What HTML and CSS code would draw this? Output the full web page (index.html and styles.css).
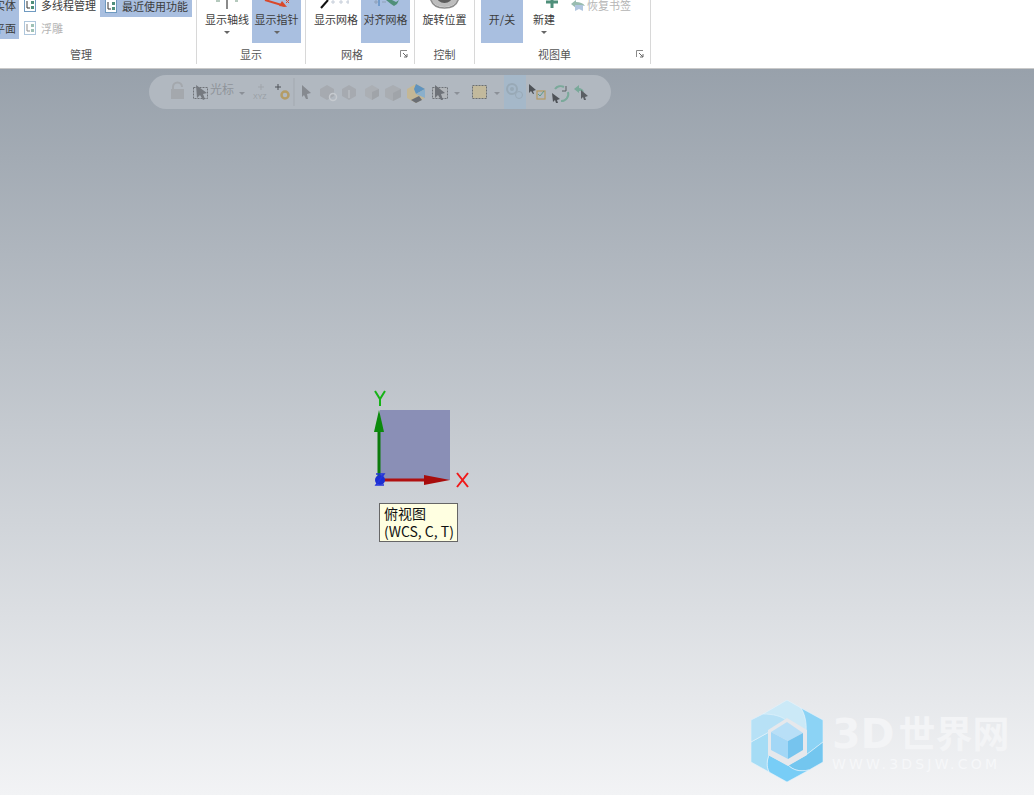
FILE: index.html
```html
<!DOCTYPE html>
<html lang="zh-CN">
<head>
  <meta charset="UTF-8" />
  <title>视图</title>
  <link rel="stylesheet" href="styles.css">
</head>
<body>
  <!-- ribbon -->
  <header class="ribbon">
    <section class="group group-manage">
      <div class="group-body manage-body">
        <div class="col-a-wrap on">
          <div class="list-col col-a">
            <div class="list-row"><span class="list-text">实体</span></div>
            <div class="list-row"><span class="list-text">平面</span></div>
          </div>
        </div>
        <div class="list-col col-b">
          <div class="list-row">
            <svg class="mini" viewBox="0 0 12 14"><use href="#tree"/></svg>
            <span class="list-text">多线程管理</span>
          </div>
          <div class="list-row off">
            <svg class="mini" viewBox="0 0 12 14"><use href="#tree"/></svg>
            <span class="list-text">浮雕</span>
          </div>
        </div>
        <div class="list-col col-c">
          <div class="list-row on">
            <svg class="mini" viewBox="0 0 12 14"><use href="#tree"/></svg>
            <span class="list-text">最近使用功能</span>
          </div>
        </div>
      </div>
      <div class="group-label">管理</div>
    </section>

    <section class="group group-show">
      <div class="group-body tool-row">
        <div class="tool tool-axis">
          <svg class="tool-icon" viewBox="0 0 46 9">
            <path d="M23 0v9" stroke="#8a8a8a" stroke-width="2"/>
            <path d="M12 1h4M31 1h3" stroke="#9db8a8" stroke-width="1.5"/>
          </svg>
          <span class="tool-text">显示轴线</span>
          <i class="caret"></i>
        </div>
        <div class="tool tool-pointer on">
          <svg class="tool-icon" viewBox="0 0 49 9">
            <path d="M13 0l20 6" stroke="#d9482b" stroke-width="2"/>
            <path d="M35 7l-8-1 3-5z" fill="#d9482b"/>
            <path d="M34 0l3 3M37 0l-3 3" stroke="#d9482b" stroke-width="1"/>
          </svg>
          <span class="tool-text">显示指针</span>
          <i class="caret"></i>
        </div>
      </div>
      <div class="group-label">显示</div>
    </section>

    <section class="group group-grid">
      <div class="group-body tool-row">
        <div class="tool tool-gridshow">
          <svg class="tool-icon" viewBox="0 0 46 9">
            <path d="M8 8l7-8" stroke="#111" stroke-width="2"/>
            <path d="M18 2h4M20 0v4M26 2h4M28 0v4M33 2h3M35 0v4" stroke="#c4ccd8" stroke-width="1"/>
          </svg>
          <span class="tool-text">显示网格</span>
        </div>
        <div class="tool tool-gridsnap on">
          <svg class="tool-icon" viewBox="0 0 49 9">
            <path d="M13 2h4M15 0v4M21 2h4" stroke="#8fa0b8" stroke-width="1"/>
            <path d="M18 0v6" stroke="#3a78b8" stroke-width="1"/>
            <path d="M25 0h6l4 2 3-2-2 4-3 2-3-2z" fill="#4f8f7a"/>
          </svg>
          <span class="tool-text">对齐网格</span>
        </div>
      </div>
      <div class="group-label label-left">网格</div>
      <svg class="launcher" viewBox="0 0 8 8"><use href="#launch"/></svg>
    </section>

    <section class="group group-ctrl">
      <div class="group-body tool-row">
        <div class="tool tool-rotate">
          <svg class="tool-icon" viewBox="0 0 52 9">
            <ellipse cx="26" cy="-3" rx="14" ry="10" fill="#bdbdbd"/>
            <ellipse cx="26" cy="-4" rx="8" ry="7" fill="#5c5c5c"/>
            <path d="M12 -1c2 7 7 9 14 9s12-2 14-9" fill="none" stroke="#8d8d8d" stroke-width="1.5"/>
          </svg>
          <span class="tool-text">旋转位置</span>
        </div>
      </div>
      <div class="group-label">控制</div>
    </section>

    <section class="group group-menu">
      <div class="group-body tool-row">
        <div class="tool tool-onoff on"><span class="tool-text">开/关</span></div>
        <div class="tool tool-new">
          <svg class="tool-icon" viewBox="0 0 42 9">
            <path d="M29 0v8M23 2h12" stroke="#4f8f7a" stroke-width="3"/>
          </svg>
          <span class="tool-text">新建</span>
          <i class="caret"></i>
        </div>
        <div class="list-row restore off">
          <svg class="mini" viewBox="0 0 14 12">
            <path d="M0 5l5-4v2c4 0 7 1 9 4-3-1-5-1-9-1v3z" fill="#8fb5a8"/>
            <path d="M4 6h8v6l-4-2-4 2z" fill="#a9c0dc"/>
          </svg>
          <span class="list-text">恢复书签</span>
        </div>
      </div>
      <div class="group-label label-left">视图单</div>
      <svg class="launcher" viewBox="0 0 8 8"><use href="#launch"/></svg>
    </section>
  </header>

  <!-- graphics window -->
  <main class="viewport">
    <div class="float-bar">
      <svg viewBox="0 0 462 34" width="462" height="34">
        <rect x="355" y="0" width="22" height="34" fill="#a5b8c9"/>
        <path d="M145 3v28" stroke="#a3a9b0"/>
        <!-- lock -->
        <path d="M24 14v-2a4.500 4.500 0 0 1 9 0" fill="none" stroke="#a4a8ad" stroke-width="2"/>
        <rect x="22" y="14" width="13" height="10" fill="#a4a8ad"/>
        <!-- cursor selection -->
        <rect x="44.500" y="12.500" width="14" height="11" fill="none" stroke="#6f7378" stroke-dasharray="2 1"/>
        <path d="M47 10l11 8-4 1 2 5-2 1-3-5-3 3z" fill="#75797f"/>
        <text class="bar-text" x="61" y="19">光标</text>
        <path d="M90 17h6l-3 3z" fill="#8b9097"/>
        <!-- xyz -->
        <path d="M109 12h6M112 9v6" stroke="#a0a5ab"/>
        <text class="bar-xyz" x="104" y="24">XYZ</text>
        <path d="M126 12h6M129 9v6" stroke="#4f5358"/>
        <circle cx="136" cy="20" r="3.500" fill="none" stroke="#b49c66" stroke-width="2.500"/>
        <!-- arrow -->
        <path d="M153 10l9 8-4 1 1 5-2 0-2-4-2 2z" fill="#868a90"/>
        <!-- boxes -->
        <path d="M178 10l7 4v7l-7 4-7-4v-7z" fill="#a6aab0"/>
        <circle cx="184" cy="22" r="3.500" fill="none" stroke="#c6cacf" stroke-width="1.500"/>
        <path d="M200 10l7 4v7l-7 4-7-4v-7z" fill="#a6aab0"/>
        <path d="M200 15v8" stroke="#c2c6cb"/>
        <path d="M223 10l7 4v7l-7 4-7-4v-7z" fill="#abafb4"/>
        <path d="M223 17l7-3v7l-7 4z" fill="#a0a4a9"/>
        <path d="M244 10l8 4v8l-8 4-8-4v-8z" fill="#a9adb2"/>
        <path d="M244 18l8-4v8l-8 4z" fill="#a0a4a9"/>
        <!-- shaded -->
        <path d="M267 9l9 5v9l-9 5-9-5v-9z" fill="#c4b795"/>
        <path d="M267 9l9 5-9 5-2-5z" fill="#5f93bf"/>
        <path d="M267 19l9-5v9z" fill="#8aafcb"/>
        <path d="M267 28l-5-3 8-4 3 4z" fill="#6a6e74"/>
        <!-- select box -->
        <rect x="283.500" y="12.500" width="15" height="11" fill="#b2b6ba" stroke="#6f7378" stroke-dasharray="2 1"/>
        <path d="M286 10l10 8-4 1 2 6-2 0-3-5-3 3z" fill="#6e7278"/>
        <path d="M305 17h6l-3 3z" fill="#8b9097"/>
        <rect x="323.500" y="10.500" width="14" height="13" fill="#c2b99c" stroke="#6a6e73" stroke-dasharray="2 1"/>
        <path d="M345 17h6l-3 3z" fill="#8b9097"/>
        <!-- view options -->
        <circle cx="363" cy="14" r="5" fill="none" stroke="#98a9b6" stroke-width="2"/>
        <circle cx="363" cy="14" r="2" fill="#98a9b6"/>
        <circle cx="370" cy="20" r="3.500" fill="#a5b8c9" stroke="#98a9b6"/>
        <path d="M380 9l7 6-3 1 1 3-1 0-2-3-2 2z" fill="#4e5257"/>
        <rect x="388" y="16" width="8" height="8" fill="none" stroke="#b39a63" stroke-width="1.200"/>
        <path d="M389 19l2 2 4-5" fill="none" stroke="#5c9a86"/>
        <path d="M403 18l8 6-3 1 1 3-2 0-1-3-2 2z" fill="#4e5257"/>
        <path d="M406 14a7 7 0 0 1 9-2M419 17a7 7 0 0 1-7 9" fill="none" stroke="#7aa99a" stroke-width="2"/>
        <path d="M417 11v5h-4" fill="none" stroke="#5a5e63"/>
        <path d="M425 14l5-4v3c2 0 4 1 5 4-2-1-3-1-5-1v2z" fill="#7aa99a"/>
        <path d="M432 15l7 6-3 1 1 3-2 0-1-3-2 2z" fill="#5a5e63"/>
      </svg>
    </div>

    <div class="gizmo">
      <svg viewBox="0 0 100 110" width="100" height="110">
        <rect x="18" y="25" width="70" height="70" fill="#8a8fb6"/>
        <path d="M17 92V41" stroke="#0b7a0b" stroke-width="3"/>
        <path d="M17 25l-5 22h10z" fill="#0b8a0b"/>
        <path d="M20 95h50" stroke="#b01010" stroke-width="3"/>
        <path d="M88 95l-26-5v10z" fill="#a80c0c"/>
        <circle cx="18" cy="95" r="5" fill="#1c2fd0"/>
        <path d="M14 89h8l-8 11h8" fill="none" stroke="#2233dd" stroke-width="1.500"/>
        <path d="M13 6l5 8 5-8M18 14v7" fill="none" stroke="#16b316" stroke-width="2"/>
        <path d="M95 88l11 14M106 88l-11 14" stroke="#f01818" stroke-width="2"/>
      </svg>
    </div>

    <div class="tip">俯视图<br>(WCS, C, T)</div>

    <div class="brand">
      <svg viewBox="0 0 72 82" width="72" height="82">
        <g stroke="#e6f4fb" stroke-width="0.600">
          <path d="M12 14L36 0l14 8c6 10 6 18 5 24L35 20z" fill="#cbe9f7"/>
          <path d="M50 8l22 12v22L55 55V32c1-8-1-18-5-24z" fill="#8cd3f5"/>
          <path d="M72 42v20l-14 8c-10 2-16 0-21-5l18-10z" fill="#73c6ef"/>
          <path d="M58 70L36 82 18 72c-3-6-2-12 0-17l19 10c5 5 11 7 21 5z" fill="#78cdf6"/>
          <path d="M18 72L0 62V42l18-10v23c-2 5-3 11 0 17z" fill="#a5dcf5"/>
          <path d="M0 42V20l12-6c10 0 18 2 23 6L18 32z" fill="#b7e1f6"/>
        </g>
        <path d="M36 18l20 12v25L37 66 17 55V30z" fill="#e6e8ec"/>
        <path d="M36 22l16 11-15 8-17-9z" fill="#b8dff7"/>
        <path d="M20 32l17 9v18l-17-9z" fill="#a3d7f6"/>
        <path d="M52 33v17l-15 9V41z" fill="#76c4ee"/>
      </svg>
      <div class="brand-text">
        <div class="brand-name"><span class="brand-num">3D</span>世界网</div>
        <div class="brand-url">WWW.3DSJW.COM</div>
      </div>
    </div>
  </main>

  <svg class="defs" width="0" height="0">
    <defs>
      <g id="tree">
        <rect x="0.500" y="0.500" width="11" height="13" fill="#fff" stroke="#6f9ac0"/>
        <path d="M3 3v7h3" fill="none" stroke="#333"/>
        <rect x="7" y="3" width="3" height="3" fill="#4f8f7a"/>
        <rect x="7" y="8" width="3" height="3" fill="#4f8f7a"/>
      </g>
      <g id="launch">
        <path d="M0.500 7V0.500H7" fill="none" stroke="#8a8a8a"/>
        <path d="M3 3l4 4M7 4v3H4" fill="none" stroke="#666"/>
      </g>
    </defs>
  </svg>
</body>
</html>
```

FILE: styles.css
```css
* { margin: 0; padding: 0; box-sizing: border-box; }
html, body { width: 100%; height: 100%; overflow: hidden; }
body {
  display: flex; flex-direction: column;
  font-family: "Noto Sans CJK SC", "Liberation Sans", sans-serif;
  font-size: 11px;
  color: #3c3c3c;
}
.defs { position: absolute; }

/* ribbon */
.ribbon {
  display: flex;
  height: 69px;
  flex: none;
  background: #fff;
  border-bottom: 1px solid #c9c9c9;
}
.group {
  position: relative;
  display: flex; flex-direction: column;
  height: 64px;
  border-right: 1px solid #d8d8d8;
}
.group-manage { width: 197px; }
.group-show { width: 109px; }
.group-grid { width: 109px; }
.group-ctrl { width: 60px; }
.group-menu { width: 176px; }
.group-body { height: 43px; overflow: hidden; }
.group-label {
  height: 21px;
  line-height: 23px;
  text-align: center;
  color: #555;
}
.group-manage .group-label { padding-right: 34px; }
.label-left { padding-right: 16px; }
.launcher {
  position: absolute;
  right: 6px; bottom: 6px;
  width: 8px; height: 8px;
}

/* small list buttons */
.manage-body { display: flex; }
.list-col { display: flex; flex-direction: column; gap: 1px; margin-top: -6px; }
.col-a-wrap { width: 19px; height: 39px; margin-right: 5px; overflow: hidden; }
.col-b { width: 76px; }
.col-c { width: 92px; }
.list-row {
  display: flex; align-items: center; gap: 5px;
  height: 22px;
  white-space: nowrap;
}
.col-a .list-row { width: 19px; justify-content: flex-end; }
.col-a .list-text { margin-right: 3px; flex: none; }
.col-c .list-row { padding-left: 5px; height: 23px; }
.list-text { line-height: 14px; }
.on { background: #a9bfe0; }
.off .list-text { color: #b4b4b4; }
.mini { width: 12px; height: 14px; flex: none; }
.off .mini { opacity: 0.55; }

/* large buttons */
.tool-row { display: flex; }
.tool {
  display: flex; flex-direction: column; align-items: center;
  height: 43px;
}
.tool-icon { display: block; height: 9px; width: 100%; flex: none; }
.tool-text { line-height: 18px; margin-top: 1px; white-space: nowrap; }
.caret {
  margin-top: 3px;
  border-top: 3px solid #666;
  border-left: 3px solid transparent;
  border-right: 3px solid transparent;
}
.group-show .tool-row { padding-left: 7px; gap: 2px; }
.tool-axis { width: 46px; }
.tool-pointer { width: 49px; }
.group-grid .tool-row { padding-left: 7px; gap: 2px; }
.tool-gridshow { width: 46px; }
.tool-gridsnap { width: 49px; }
.tool-rotate { width: 59px; }
.group-menu .tool-row { padding-left: 6px; }
.tool-onoff { width: 42px; padding-top: 9px; }
.tool-new { width: 42px; }
.restore { margin-top: -6px; margin-left: 6px; gap: 2px; }
.restore .mini { width: 14px; height: 12px; opacity: 0.9; }

/* graphics window */
.viewport {
  position: relative;
  flex: 1;
  background: linear-gradient(#98a1ab, #f2f3f5);
}
.float-bar {
  position: absolute;
  left: 149px; top: 6px;
  width: 462px; height: 34px;
  overflow: hidden;
  border-radius: 17px;
  background: #b1b8c0;
}
.float-bar svg { display: block; }
.bar-text { font-size: 12px; fill: #8f949a; }
.bar-xyz { font-size: 7px; fill: #989ea4; font-family: "Liberation Sans", sans-serif; }

.gizmo {
  position: absolute;
  left: 362px; top: 316px;
  width: 110px; height: 110px;
}
.gizmo svg { overflow: visible; display: block; }
.tip {
  position: absolute;
  left: 379px; top: 434px;
  width: 79px; height: 39px;
  padding: 0 0 0 4px;
  background: #ffffe1;
  border: 1px solid #666;
  font-size: 14px;
  line-height: 18px;
  color: #111;
  white-space: nowrap;
}

.brand {
  position: absolute;
  left: 751px; top: 631px;
  display: flex; align-items: center; gap: 9px;
}
.brand svg { display: block; }
.brand-text { margin-top: -6px; }
.brand-name {
  font-size: 37px;
  line-height: 52px;
  font-weight: 700;
  color: #f3f4f6;
  white-space: nowrap;
}
.brand-num {
  font-family: "DejaVu Sans", sans-serif;
  font-size: 41px;
  line-height: 1;
  margin-right: 4px;
}
.brand-url {
  font-family: "DejaVu Sans", sans-serif;
  font-size: 14px;
  letter-spacing: 3.2px;
  line-height: 12px;
  color: #f6f7f9;
  white-space: nowrap;
}
```
